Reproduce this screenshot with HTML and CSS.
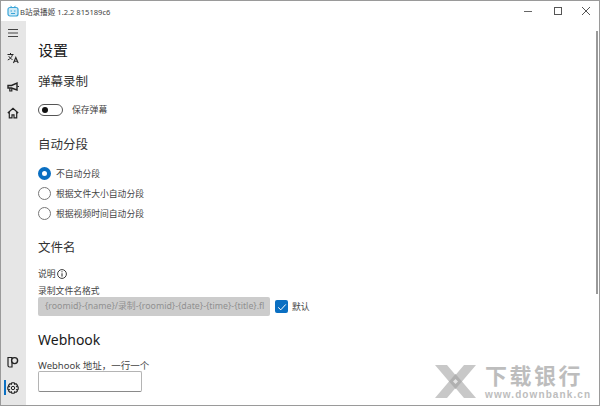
FILE: index.html
```html
<!DOCTYPE html>
<html lang="zh-CN">
<head>
  <meta charset="UTF-8" />
  <title>B站录播姬</title>
  <link rel="stylesheet" href="styles.css">
</head>
<body>
  <div class="window">
    <header class="titlebar">
      <svg class="app-icon" viewBox="0 0 12 12" width="12" height="12">
        <rect x="1" y="2.5" width="10" height="8.5" rx="2" fill="#cfeaf7" stroke="#3aa5d8" stroke-width="1.2"/>
        <path d="M3.5 0.8 5 2.5M8.5 0.8 7 2.5" stroke="#3aa5d8" stroke-width="1"/>
        <path d="M3.5 6H5M7 6H8.5M4 8.5H8" stroke="#3aa5d8" stroke-width="1.1"/>
      </svg>
      <span class="app-title">B站录播姬 1.2.2 815189c6</span>
      <div class="caption">
        <svg viewBox="0 0 10 10" width="10" height="10"><path d="M0 5.5H8" stroke="#666" fill="none"/></svg>
        <svg viewBox="0 0 10 10" width="10" height="10"><rect x="1.5" y="1.5" width="7" height="7" stroke="#555" fill="none"/></svg>
        <svg viewBox="0 0 10 10" width="10" height="10"><path d="M1 1 9 9M9 1 1 9" stroke="#555" fill="none"/></svg>
      </div>
    </header>

    <div class="body">
      <nav class="sidebar">
        <svg class="nav-icon menu" viewBox="0 0 12 12" width="12" height="12"><path d="M1 2.5H11M1 6H11M1 9.5H11" stroke="#444" fill="none"/></svg>
        <svg class="nav-icon lang" viewBox="0 0 12 12" width="12" height="12">
          <path d="M0.5 2.5H6.5M3.5 1V2.5M5.5 2.5C5 5 3 7 0.8 8M1.8 4.2C2.6 6 4 7 5.5 7.5" stroke="#222" fill="none"/>
          <path d="M6.5 11 8.8 5.5 11.2 11M7.3 9.3H10.4" stroke="#222" fill="none" stroke-width="1.1"/>
        </svg>
        <svg class="nav-icon horn" viewBox="0 0 12 12" width="12" height="12">
          <path d="M1 4.5H4.5L10 2V9L4.5 7H1Z" stroke="#222" stroke-width="1.4" fill="none"/>
          <path d="M2.8 7.2V10H4.8V7.4M10.5 5.5H12" stroke="#222" stroke-width="1.2" fill="none"/>
        </svg>
        <svg class="nav-icon home" viewBox="0 0 12 12" width="12" height="12">
          <path d="M0.8 6 6 1.2 11.2 6M2.3 5V10.8H5V7.8H7V10.8H9.7V5" stroke="#222" stroke-width="1.2" fill="none"/>
        </svg>
        <div class="nav-spacer"></div>
        <svg class="nav-icon patreon" viewBox="0 0 12 12" width="12" height="12">
          <path d="M1 1.5H5V11H2.5A1.5 1.5 0 0 1 1 9.5Z" stroke="#222" stroke-width="1.2" fill="none"/>
          <circle cx="7.6" cy="4.6" r="3" stroke="#222" stroke-width="1.4" fill="#e6e6e6"/>
        </svg>
        <div class="nav-active">
          <span class="nav-marker"></span>
          <svg class="nav-icon gear" viewBox="0 0 12 12" width="12" height="12">
            <circle cx="6" cy="6" r="1.7" stroke="#222" fill="none"/>
            <path d="M4.8 0.8H7.2L7.6 2.3 9 1.7 10.5 3.4 9.6 4.6 11.2 5V7.2L9.7 7.5 10.5 8.9 9 10.4 7.6 9.7 7.2 11.2H4.8L4.4 9.7 3 10.4 1.5 8.9 2.3 7.5 0.8 7.2V5L2.4 4.6 1.5 3.4 3 1.7 4.4 2.3Z" stroke="#222" stroke-width="1.1" fill="none"/>
          </svg>
        </div>
      </nav>

      <main class="content">
        <h1 class="page-title">设置</h1>

        <h2 class="section-title">弹幕录制</h2>
        <div class="toggle-row">
          <span class="toggle"><span class="toggle-knob"></span></span>
          <span class="label">保存弹幕</span>
        </div>

        <h2 class="section-title split-title">自动分段</h2>
        <div class="radio-group">
          <div class="radio-row"><span class="radio checked"></span><span class="label">不自动分段</span></div>
          <div class="radio-row"><span class="radio"></span><span class="label">根据文件大小自动分段</span></div>
          <div class="radio-row"><span class="radio"></span><span class="label">根据视频时间自动分段</span></div>
        </div>

        <h2 class="section-title name-title">文件名</h2>
        <div class="help-row">
          <span class="label">说明</span>
          <svg viewBox="0 0 10 10" width="10" height="10">
            <circle cx="5" cy="5" r="4.4" stroke="#222" stroke-width="0.9" fill="none"/>
            <path d="M5 4.3V7.6M5 2.3V3.3" stroke="#222" fill="none"/>
          </svg>
        </div>
        <div class="field-label">录制文件名格式</div>
        <div class="format-row">
          <div class="format-input">{roomid}-{name}/录制-{roomid}-{date}-{time}-{title}.fl</div>
          <span class="checkbox">
            <svg viewBox="0 0 12 12" width="12" height="12"><path d="M2.2 6.4 4.8 8.8 9.8 3.4" stroke="#fff" stroke-width="1" fill="none"/></svg>
          </span>
          <span class="label">默认</span>
        </div>

        <h2 class="section-title hook-title">Webhook</h2>
        <div class="field-label hook-label">Webhook 地址，一行一个</div>
        <div class="hook-input"></div>
      </main>
    </div>

    <div class="scrollbar"></div>

    <div class="watermark">
      <svg viewBox="0 0 41 33" width="41" height="33">
        <path d="M0 0H12L20.5 10 29 0H41L27 16.5 41 33H29L20.5 23 12 33H0L14 16.5Z" fill="#c8c8c8"/>
        <path d="M20.5 9 27 16.5 20.5 24 14 16.5Z" fill="#b0b0b0"/>
        <path d="M20.5 14 23 16.5 20.5 19 18 16.5Z" fill="#e4e4e4"/>
      </svg>
      <div class="wm-text">
        <div class="wm-name">下载银行</div>
        <div class="wm-url">www.downbank.cn</div>
      </div>
    </div>
  </div>
</body>
</html>
```

FILE: styles.css
```css
html, body {
  margin: 0;
  padding: 0;
  background: #fff;
}

.window {
  position: relative;
  width: 600px;
  height: 406px;
  box-sizing: border-box;
  border: 1px solid #9a9a9a;
  display: flex;
  flex-direction: column;
  overflow: hidden;
  font-family: "Noto Sans", "Noto Sans CJK SC", sans-serif;
  color: #1a1a1a;
}

.titlebar {
  height: 20px;
  flex: none;
  display: flex;
  align-items: center;
  padding-left: 6px;
}

.app-title {
  margin-left: 1px;
  font-size: 7.6px;
  color: #444;
}

.caption {
  margin-left: auto;
  display: flex;
  gap: 18.5px;
  padding-right: 8px;
}

.body {
  flex: 1;
  display: flex;
  min-height: 0;
}

.sidebar {
  width: 25px;
  flex: none;
  background: #e6e6e6;
  display: flex;
  flex-direction: column;
  align-items: center;
  padding: 6px 2px 11px 0;
  box-sizing: border-box;
}

.nav-icon {
  display: block;
}

.lang { margin-top: 13px; }
.horn { margin-top: 17px; }
.home { margin-top: 14px; }

.nav-spacer { flex: 1; }

.nav-active {
  position: relative;
  margin-top: 14px;
}

.nav-marker {
  position: absolute;
  left: -3px;
  top: -2px;
  width: 2px;
  height: 15px;
  background: #0a6fc2;
}

.content {
  flex: 1;
  padding: 18px 0 0 12px;
}

.page-title {
  margin: 0;
  font-size: 15px;
  line-height: 22px;
  font-weight: 400;
}

.section-title {
  margin: 11px 0 0;
  font-size: 12.5px;
  line-height: 20px;
  font-weight: 400;
  color: #333;
}

.toggle-row {
  display: flex;
  align-items: center;
  margin-top: 11px;
}

.toggle {
  width: 23px;
  height: 10px;
  border: 1px solid #555;
  border-radius: 6px;
  display: flex;
  align-items: center;
}

.toggle-knob {
  width: 6px;
  height: 6px;
  margin-left: 3px;
  border-radius: 50%;
  background: #111;
}

.label {
  font-size: 8.8px;
  color: #444;
}

.toggle-row .label {
  margin-left: 9px;
}

.split-title {
  margin-top: 19px;
}

.radio-group {
  margin-top: 12px;
  display: flex;
  flex-direction: column;
  gap: 7px;
}

.radio-row {
  display: flex;
  align-items: center;
  height: 13px;
}

.radio {
  width: 11px;
  height: 11px;
  border: 1px solid #777;
  border-radius: 50%;
  margin-right: 5px;
  flex: none;
}

.radio.checked {
  width: 5px;
  height: 5px;
  border: 4px solid #0a6fc2;
  background: #fff;
}

.name-title {
  margin-top: 18px;
}

.help-row {
  display: flex;
  align-items: center;
  gap: 1px;
  margin-top: 9px;
  height: 13px;
}

.field-label {
  font-size: 8.8px;
  line-height: 11px;
  color: #444;
  margin-top: 6px;
}

.format-row {
  display: flex;
  align-items: center;
}

.format-input {
  width: 232px;
  height: 19px;
  box-sizing: border-box;
  background: #cccccc;
  border-radius: 2px;
  color: #909090;
  font-size: 8.8px;
  line-height: 19px;
  padding-left: 7px;
  white-space: nowrap;
  overflow: hidden;
}

.checkbox {
  width: 13px;
  height: 13px;
  margin: 0 4px 0 5px;
  background: #0a6fc2;
  border-radius: 2px;
  display: flex;
  align-items: center;
  justify-content: center;
}

.hook-title {
  margin-top: 14px;
  font-size: 14px;
  color: #1a1a1a;
}

.hook-label {
  margin-top: 10px;
  font-size: 9.5px;
}

.hook-input {
  width: 104px;
  height: 21px;
  box-sizing: border-box;
  border: 1px solid #b4b4b4;
  border-bottom-color: #8a8a8a;
  border-radius: 2px;
  background: #fff;
}

.scrollbar {
  position: absolute;
  right: 1px;
  top: 30px;
  width: 2px;
  height: 263px;
  background: #9a9a9a;
}

.watermark {
  position: absolute;
  left: 434px;
  top: 364px;
  display: flex;
  gap: 9px;
  font-family: "Liberation Sans", "Noto Sans CJK SC", sans-serif;
}

.wm-name {
  font-size: 22px;
  line-height: 24px;
  font-weight: 700;
  letter-spacing: 2.5px;
  color: #bdbdbd;
  white-space: nowrap;
}

.wm-url {
  font-size: 10px;
  line-height: 11px;
  font-weight: 700;
  color: #bdbdbd;
  letter-spacing: 1.1px;
  white-space: nowrap;
}
```
